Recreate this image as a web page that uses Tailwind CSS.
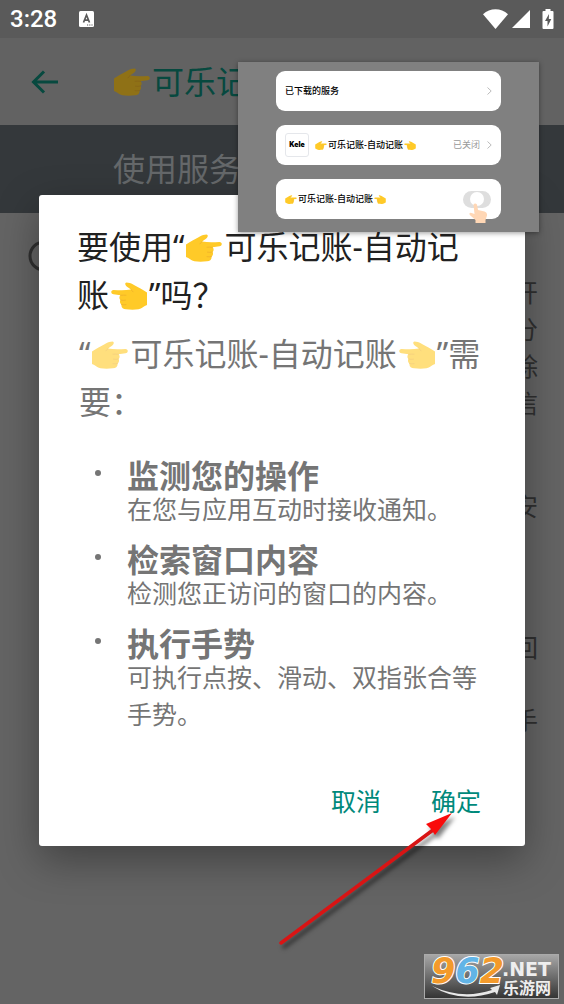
<!DOCTYPE html>
<html lang="zh-CN">
<head>
  <meta charset="UTF-8" />
  <meta name="viewport" content="width=device-width, initial-scale=1.0" />
  <title>可乐记账-自动记账</title>
  <script src="https://cdn.jsdelivr.net/npm/@tailwindcss/browser@4"></script>
</head>
<body class="relative min-h-screen overflow-x-hidden bg-[#646464] font-['Noto_Sans','Noto_Sans_CJK_SC',sans-serif] text-[#212121]">

  <!-- shared hand icon -->
  <svg class="hidden">
    <symbol id="hand" viewBox="0 0 36 28">
      <path fill="#ffca28" d="M0 10.5C4 7.500 9 5.500 13 3C16 1 18.500 .4 20.500 .4C22.500 .6 22 3.500 20 4.800L16 7.600C22 8.400 28 8.200 33.500 7.900C36.500 8 36.500 12 33.500 12.300L26.500 13.300C28 14.500 28 17 26.500 18C27.500 19.500 27 21.700 25.500 22.500C26 25.500 24 27 21 27.300C14 28.300 7 27.700 4.500 25.500C3 24.200 1.500 23.500 0 23Z" />
      <path fill="none" stroke="#efb12a" stroke-width=".8" stroke-linecap="round" d="M21 13.200C23 13 24.500 13.200 26.500 13.300M21.500 18.200C23 18.500 25 18.400 26.500 18M21 22.700C22.500 23 24 22.900 25.500 22.500M16 7.600C15 8.300 14.500 9 14 9.800" />
    </symbol>
  </svg>

  <!-- status bar -->
  <div class="flex h-[38px] items-center bg-[#5a5a5a] pr-[10px] pl-[10px] text-white">
    <span class="font-['Roboto'] text-2xl font-medium">3:28</span>
    <svg class="ml-[22px] h-4 w-4" viewBox="0 0 16 16">
      <rect width="15" height="16" rx="1.500" fill="#fff" />
      <path d="M4.500 11.500L7.500 4L10.500 11.500M5.500 9.200H9.500" fill="none" stroke="#5a5a5a" stroke-width="1.700" />
      <path d="M8 14H9.200M10.200 14H11.400M12.400 14H13.600" stroke="#5a5a5a" stroke-width="1.200" />
    </svg>
    <svg class="ml-auto h-5 w-[25px]" viewBox="0 0 25 20">
      <path fill="#fff" d="M12.500 20L0 5.200C7-1.500 18-1.500 25 5.200Z" />
    </svg>
    <svg class="ml-1 h-[18px] w-[18px]" viewBox="0 0 18 18">
      <path fill="#fff" d="M18 0V18H0Z" />
    </svg>
    <svg class="ml-3 h-5 w-3" viewBox="0 0 12 20">
      <path fill="#fff" d="M3.500 0H8.500V2H10.500Q11.500 2 11.500 3V19Q11.500 20 10.500 20H1.500Q.5 20 .5 19V3Q.5 2 1.500 2H3.500Z" />
      <path fill="#5a5a5a" d="M7 5L3 12H5.500V17.500L9.300 10H6.800Z" />
    </svg>
  </div>

  <!-- service page behind the dialog -->
  <header class="flex h-[87px] items-center bg-[#626262] pl-[31px] text-[#07493f]">
    <button class="h-6 w-[27px]" aria-label="返回">
      <svg class="h-6 w-[27px]" viewBox="0 0 27 24" fill="none" stroke="currentColor" stroke-width="3">
        <path d="M27 12H2.500M13 1.500L2.500 12L13 22.500" />
      </svg>
    </button>
    <h1 class="ml-14 flex items-center text-[32px] whitespace-nowrap">
      <svg class="mr-[2px] h-7 w-9 brightness-[.56]"><use href="#hand" /></svg>可乐记账
    </h1>
  </header>
  <div class="flex h-[88px] items-center bg-[#34383b] pl-[113px] text-[32px] text-[#65686a]">使用服务</div>
  <main class="flex items-start justify-between pr-[26px] pl-7 text-[25px] leading-[37px] text-[#303030]">
    <svg class="mt-[27px] h-8 w-8" viewBox="0 0 32 32" fill="none" stroke="currentColor" stroke-width="3">
      <circle cx="16" cy="16" r="14" />
      <path d="M16 14V23M16 8V11" />
    </svg>
    <div class="pt-[61px] text-right">
      <p>开<br />分<br />除<br />信</p>
      <p class="mt-[66px]">安</p>
      <p class="mt-[104px]">回</p>
      <p class="mt-9">手</p>
    </div>
  </main>

  <!-- permission dialog -->
  <section role="dialog" aria-labelledby="dialog-title" class="absolute inset-x-[39px] top-[195px] rounded-[3px] bg-white pt-7 pb-5 shadow-[0_14px_40px_rgba(0,0,0,0.35)]">
    <h2 id="dialog-title" class="pr-12 pl-[38px] text-[32px] leading-[48px]">要使用“<svg class="mr-[2px] inline h-7 w-[38px] align-[-3px]"><use href="#hand" /></svg>可乐记账-自动记账<svg class="mx-[2px] inline h-7 w-9 -scale-x-100 align-[-3px]"><use href="#hand" /></svg>”吗？</h2>
    <div class="pr-9 pl-10 text-[#757575]">
      <p class="mt-[11px] text-[32px] leading-[48px]">“<svg class="mr-[2px] inline h-7 w-[38px] align-[-3px] opacity-60"><use href="#hand" /></svg>可乐记账-自动记账<svg class="mx-[2px] inline h-7 w-9 -scale-x-100 align-[-3px] opacity-60"><use href="#hand" /></svg>”需要：</p>
      <ul class="mt-[35px] flex flex-col gap-[17px] pl-12 text-[25px] leading-[37px]">
        <li class="relative before:absolute before:top-[9px] before:-left-8 before:h-[6px] before:w-[6px] before:rounded-full before:bg-[#757575]">
          <h3 class="text-[32px] leading-[30px] font-bold">监测您的操作</h3>
          <p>在您与应用互动时接收通知。</p>
        </li>
        <li class="relative before:absolute before:top-[9px] before:-left-8 before:h-[6px] before:w-[6px] before:rounded-full before:bg-[#757575]">
          <h3 class="text-[32px] leading-[30px] font-bold">检索窗口内容</h3>
          <p>检测您正访问的窗口的内容。</p>
        </li>
        <li class="relative before:absolute before:top-[9px] before:-left-8 before:h-[6px] before:w-[6px] before:rounded-full before:bg-[#757575]">
          <h3 class="text-[32px] leading-[30px] font-bold">执行手势</h3>
          <p>可执行点按、滑动、双指张合等手势。</p>
        </li>
      </ul>
    </div>
    <div class="mt-[45px] flex justify-end gap-[18px] pr-7 text-[25px] text-[#00897b]">
      <button class="h-12 px-4">取消</button>
      <button class="h-12 px-4">确定</button>
    </div>
  </section>

  <!-- floating guide -->
  <aside class="absolute top-[62px] right-[25px] flex w-[301px] flex-col gap-[14px] bg-[#808080] pt-[9px] pr-[38px] pb-[13px] pl-[38px] text-[9px] font-medium text-black shadow-[0_1px_5px_rgba(0,0,0,0.4)]">
    <div class="flex h-10 items-center rounded-[9px] bg-white pr-[9px] pl-[9px]">
      <span>已下载的服务</span>
      <svg class="ml-auto h-2 w-[5px]" viewBox="0 0 5 8" fill="none" stroke="#bbb"><path d="M.5 .5L4.200 4L.5 7.500" /></svg>
    </div>
    <div class="flex h-10 items-center rounded-[9px] bg-white pr-[9px] pl-[9px]">
      <span class="mr-[6px] flex h-6 w-6 items-center justify-center rounded-[3px] border border-gray-200 font-['Inter'] text-[7px] font-black">Kele</span>
      <svg class="mr-px h-[9px] w-3"><use href="#hand" /></svg>
      <span>可乐记账-自动记账</span>
      <svg class="ml-px h-[9px] w-3 -scale-x-100"><use href="#hand" /></svg>
      <span class="ml-auto font-normal text-[#999]">已关闭</span>
      <svg class="ml-[7px] h-2 w-[5px]" viewBox="0 0 5 8" fill="none" stroke="#bbb"><path d="M.5 .5L4.200 4L.5 7.500" /></svg>
    </div>
    <div class="relative flex h-10 items-center rounded-[9px] bg-white pr-[10px] pl-[9px]">
      <svg class="mr-px h-[9px] w-3"><use href="#hand" /></svg>
      <span>可乐记账-自动记账</span>
      <svg class="ml-px h-[9px] w-3 -scale-x-100"><use href="#hand" /></svg>
      <label class="ml-auto flex h-[17px] w-7 items-center justify-center rounded-full bg-[#dedede]">
        <input type="checkbox" role="switch" aria-label="可乐记账-自动记账" class="h-[14px] w-[14px] appearance-none rounded-full bg-white" />
      </label>
      <svg class="pointer-events-none absolute right-[14px] -bottom-1 h-5 w-[18px]" viewBox="0 0 18 20">
        <path fill="#ffd7b5" d="M4.500 1.500Q6-.5 8 1.500L9 7L15.500 8.500Q18.500 9.500 18 12.500L16.500 17V20H6.500V17L.8 12Q-.3 10 1.800 9.800L5.500 11Z" />
      </svg>
    </div>
  </aside>

  <!-- pointer arrow -->
  <svg class="pointer-events-none absolute top-[808px] left-[275px] h-[142px] w-[185px] drop-shadow-[3px_4px_2px_rgba(0,0,0,0.5)]" viewBox="0 0 185 142">
    <path d="M6 135L158 22" stroke="#d91414" stroke-width="3.500" stroke-linecap="round" />
    <path fill="#f90b0b" d="M177 5L151 16L156 21L160 27Z" />
  </svg>

  <!-- site badge -->
  <svg class="absolute top-[954px] right-[5px] h-[45px] w-[135px]" viewBox="0 0 135 45">
    <defs>
      <linearGradient id="badge" x1="0" y1="0" x2="0" y2="1">
        <stop offset="0" stop-color="#a8a8a8" />
        <stop offset="1" stop-color="#333" />
      </linearGradient>
    </defs>
    <rect x=".5" y=".5" width="134" height="44" fill="url(#badge)" stroke="#aaa" />
    <text class="font-['DejaVu_Sans'] font-bold italic" x="7" y="29" font-size="35" stroke="#fff" stroke-width="2" paint-order="stroke" fill="#f39a2b">9<tspan fill="#62b4e6">6</tspan>2</text>
    <path fill="#e8e8e8" d="M8 32Q38 46 68 36L66 34L76 31L73 41L71 38Q36 50 8 32Z" />
    <text class="font-['DejaVu_Sans'] font-bold" x="78" y="22" font-size="19" fill="#eee">.NET</text>
    <text class="font-['Noto_Sans_CJK_SC'] font-bold" x="79" y="40" font-size="16" fill="#eee">乐游网</text>
  </svg>
</body>
</html>
